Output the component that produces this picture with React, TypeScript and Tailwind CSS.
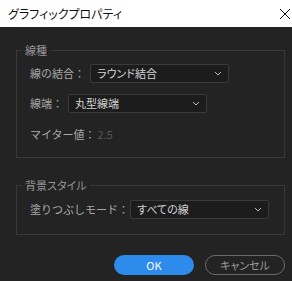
function Chevron() {
  return (
    <svg width="8" height="5" viewBox="0 0 8 5" className="mr-[1px] shrink-0">
      <path d="M1 1 L4 4 L7 1" stroke="#b8b8b8" strokeWidth="1" fill="none" />
    </svg>
  )
}

function Select({ value }: { value: string }) {
  return (
    <div className="flex h-[19px] w-[139px] items-center justify-between rounded-[2px] border border-[#3a3a3a] bg-[#1c1c1c] pl-[6px] pr-[5px] text-[11px] leading-none text-[#d2d2d2]">
      <span>{value}</span>
      <Chevron />
    </div>
  )
}

function Row({
  label,
  children,
  className = '',
}: {
  label: string
  children: React.ReactNode
  className?: string
}) {
  return (
    <div className={`flex h-[19px] items-center pl-[13px] ${className}`}>
      <span className="text-[11px] leading-none text-[#a8a8a8] [font-feature-settings:normal]">{label}</span>
      {children}
    </div>
  )
}

export default function App() {
  return (
    <div className="flex h-[281px] w-[292px] flex-col overflow-hidden font-['Noto_Sans_CJK_JP',sans-serif] [font-feature-settings:'palt']">
      <div className="flex h-[27px] items-center justify-between bg-white pl-[8px] pr-[1px]">
        <span className="text-[12px] leading-none text-[#111]">グラフィックプロパティ</span>
        <svg width="12" height="12" viewBox="0 0 12 12">
          <path d="M1 1 L11 11 M11 1 L1 11" stroke="#111" strokeWidth="1" fill="none" />
        </svg>
      </div>

      <div className="flex flex-1 flex-col bg-[#232323]">
        <fieldset className="ml-4 mr-[7px] mt-[16px] border border-[#383838] pb-[13px] pt-[7px]">
          <legend className="ml-[5px] px-[3px] text-[11px] leading-[14px] text-[#959595]">線種</legend>
          <Row label="線の結合：" className="gap-[5px]">
            <Select value="ラウンド結合" />
          </Row>
          <Row label="線端：" className="mt-[11px] gap-[5px]">
            <Select value="丸型線端" />
          </Row>
          <Row label="マイター値：" className="mt-[12px] gap-[2px]">
            <span className="text-[11px] leading-none text-[#575757]">2.5</span>
          </Row>
        </fieldset>

        <fieldset className="ml-4 mr-[7px] mt-[20px] border border-[#383838] pb-[15px] pt-[8px]">
          <legend className="ml-[5px] px-[3px] text-[11px] leading-[14px] text-[#959595]">背景スタイル</legend>
          <Row label="塗りつぶしモード：" className="gap-[1px]">
            <Select value="すべての線" />
          </Row>
        </fieldset>

        <div className="mr-[7px] mt-[20px] flex justify-end gap-[11px]">
          <button
            type="button"
            className="flex h-[20px] w-[80px] items-center justify-center rounded-full bg-[#2d8ceb] text-[11px] leading-none text-white"
          >
            OK
          </button>
          <button
            type="button"
            className="flex h-[20px] w-[80px] items-center justify-center rounded-full border border-[#6b6b6b] text-[11px] leading-none text-[#9a9a9a]"
          >
            キャンセル
          </button>
        </div>
      </div>
    </div>
  )
}
